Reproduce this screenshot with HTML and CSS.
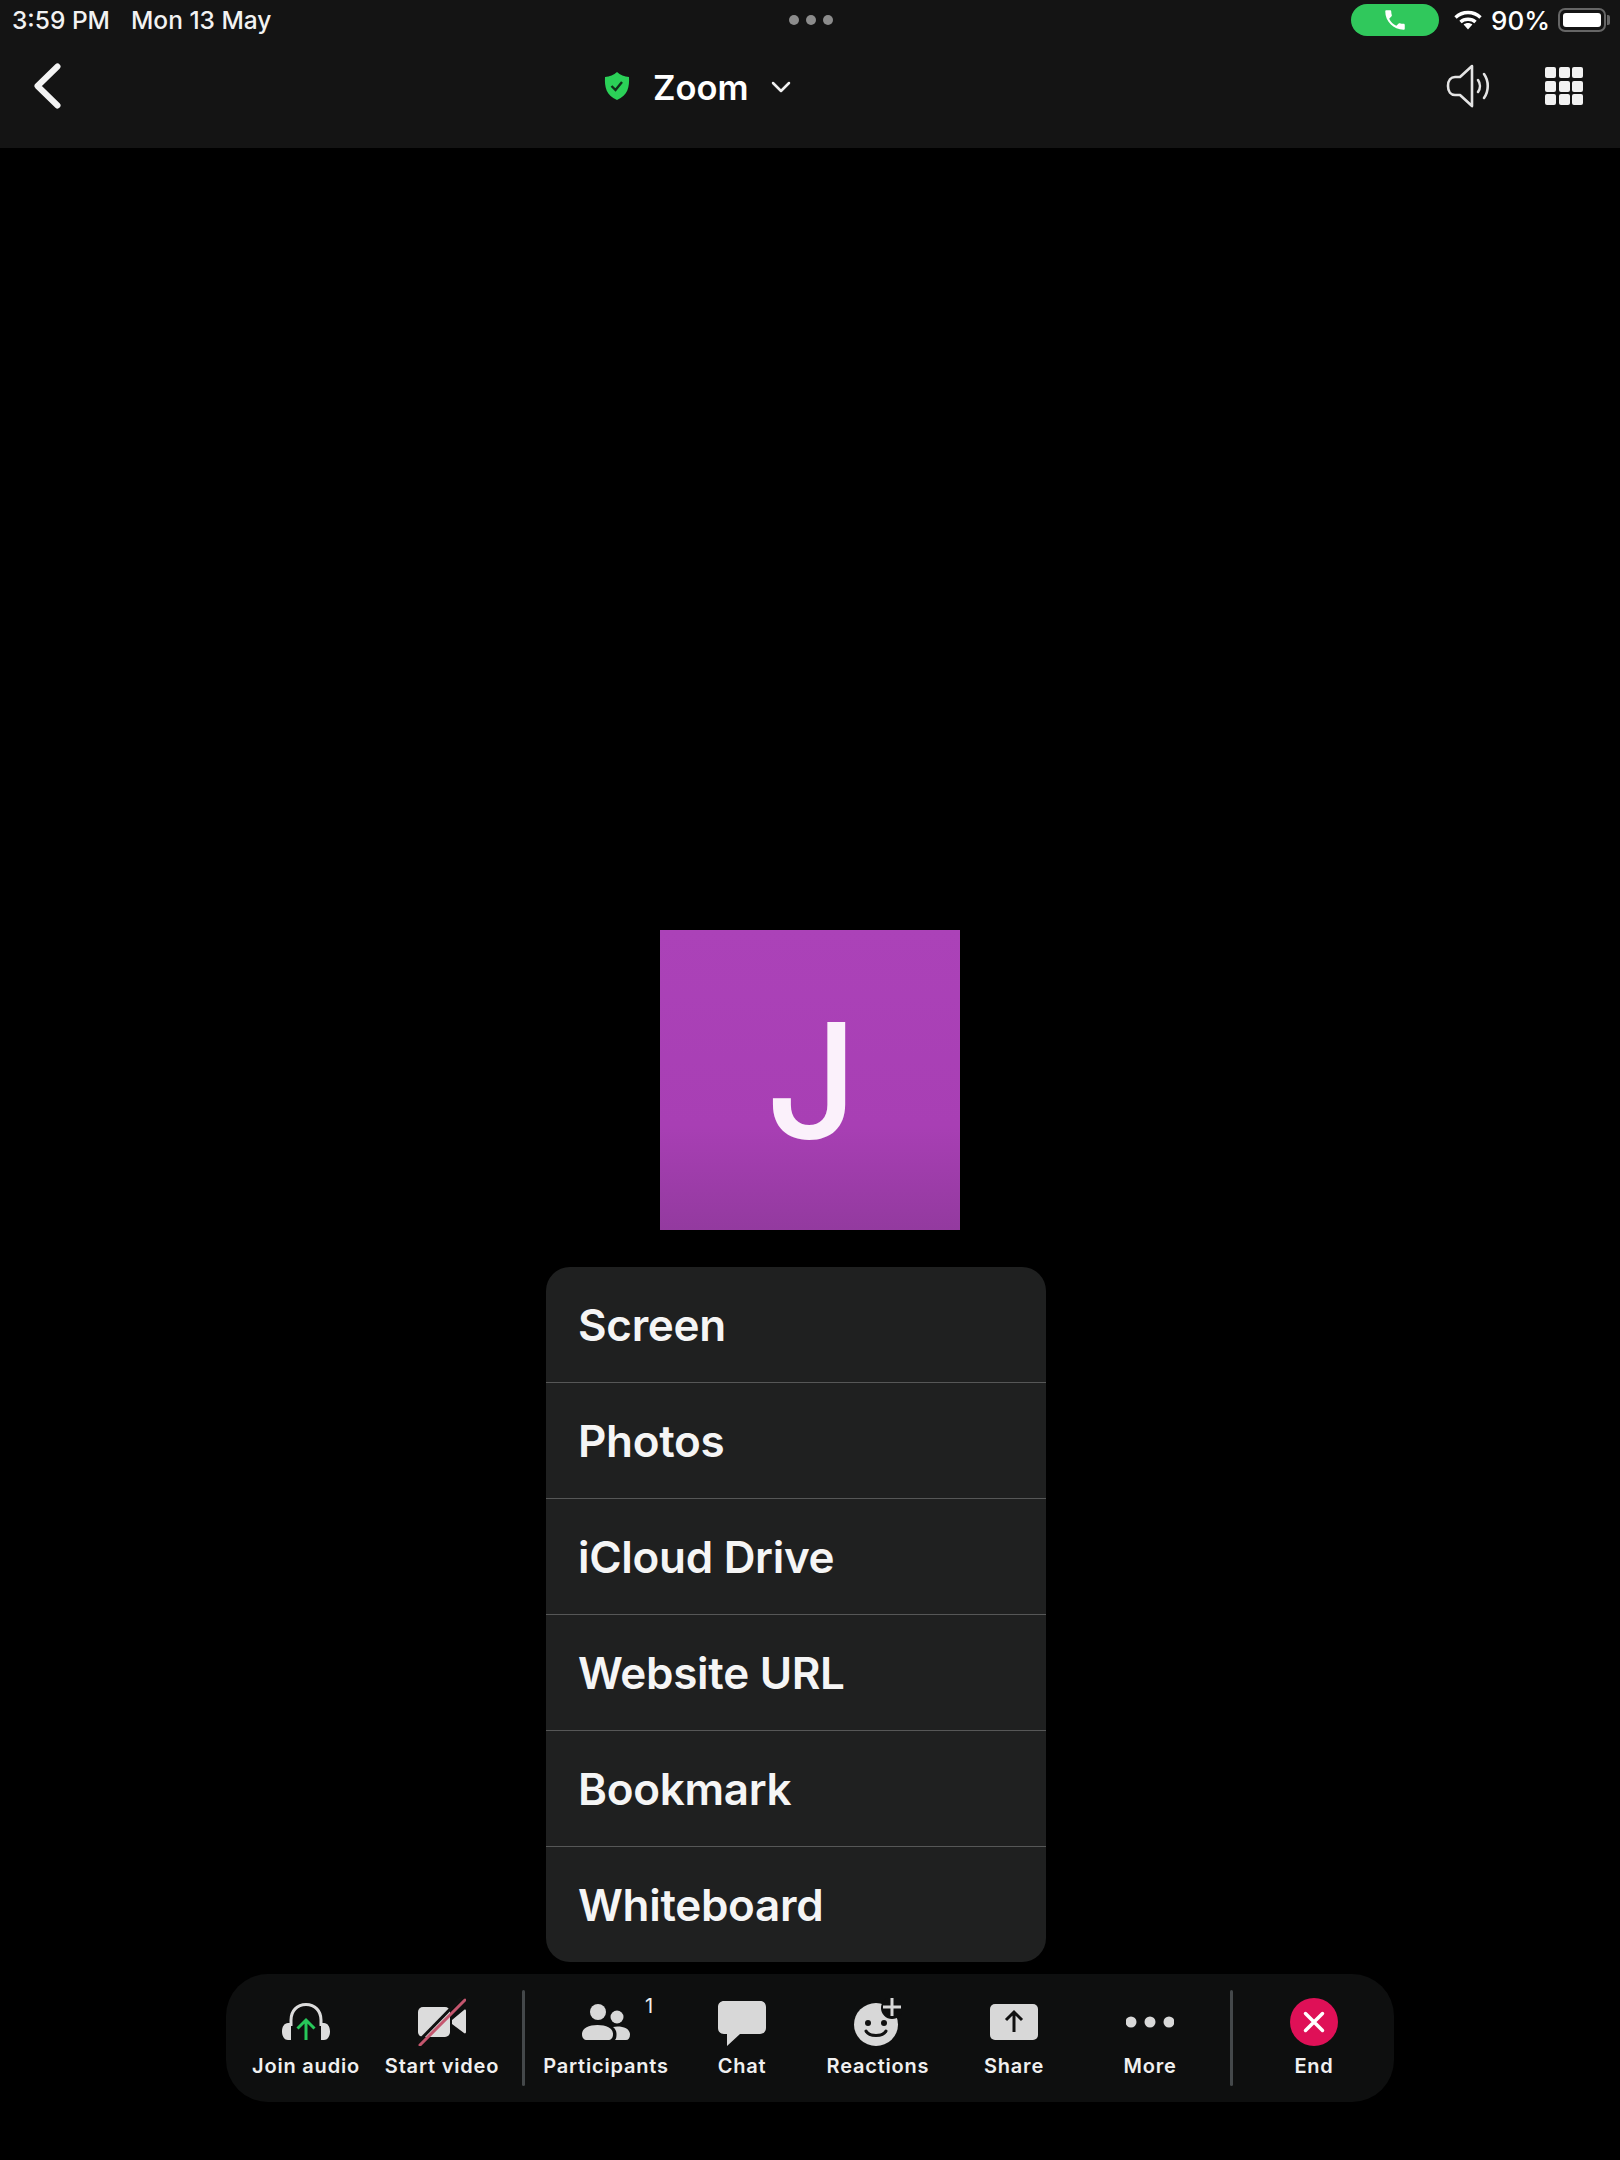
FILE: index.html
```html
<!DOCTYPE html>
<html lang="en">
<head>
  <meta charset="UTF-8" />
  <meta name="viewport" content="width=device-width, initial-scale=1.0" />
  <title>Zoom Meeting</title>
  <link rel="stylesheet" href="styles.css">
</head>
<body>
  <div class="screen">
    <!-- Top bar -->
    <div class="top-bar">
      <div class="status-bar">
        <div class="status-left">
          <span>3:59 PM</span>
          <span>Mon 13 May</span>
        </div>
        <div class="status-dots"><i></i><i></i><i></i></div>
        <div class="status-right">
          <div class="call-pill">
            <svg width="26" height="26" viewBox="0 0 24 24"><path fill="#fff" d="M6.62 10.79c1.44 2.83 3.76 5.14 6.59 6.59l2.2-2.2c.27-.27.67-.36 1.02-.24 1.12.37 2.33.57 3.57.57.55 0 1 .45 1 1V20c0 .55-.45 1-1 1-9.39 0-17-7.61-17-17 0-.55.45-1 1-1h3.5c.55 0 1 .45 1 1 0 1.25.2 2.45.57 3.57.11.35.03.74-.25 1.02l-2.2 2.2z"/></svg>
          </div>
          <svg class="wifi" width="28" height="20" viewBox="0 0 28 20" fill="none" stroke="#fff" stroke-width="3.4">
            <path d="M1.5 7.5C8.5 .8 19.5 .8 26.5 7.5"/>
            <path d="M6.5 12C10.5 8.4 17.5 8.4 21.5 12"/>
            <path fill="#fff" stroke="none" d="M9.6 14.6c2.6-2 6.2-2 8.8 0L14 19.6z"/>
          </svg>
          <span class="battery-text">90%</span>
          <div class="battery"><div class="battery-fill"></div></div>
          <div class="battery-nub"></div>
        </div>
      </div>
      <div class="nav-bar">
        <svg class="back" width="28" height="46" viewBox="0 0 28 46" fill="none" stroke="#f4f4f4" stroke-width="6" stroke-linecap="round" stroke-linejoin="round"><path d="M24.5 3.500L4.500 23l20 19.500"/></svg>
        <div class="meeting-title">
          <svg width="28" height="30" viewBox="0 0 28 30"><path fill="#2bd158" d="M14 1c3 3 7.500 4.500 12 5 .5 10-1 18-12 23C3 24 1.500 16 2 6c4.500-.5 9-2 12-5z"/><path fill="none" stroke="#10301a" stroke-width="2.400" d="M8.500 15l4 4 6.500-8"/></svg>
          <span>Zoom</span>
          <svg class="title-caret" width="20" height="12" viewBox="0 0 20 12" fill="none" stroke="#f0f0f0" stroke-width="2.500" stroke-linecap="round" stroke-linejoin="round"><path d="M2 2l8 8 8-8"/></svg>
        </div>
        <div class="nav-right">
          <svg width="44" height="44" viewBox="0 0 44 44" fill="none" stroke="#e4e4e4" stroke-width="2.600" stroke-linecap="round" stroke-linejoin="round">
            <path d="M26 2L14 13H9c-4 0-7 3-7 9s3 9 7 9h5l12 11z"/>
            <path d="M32 16c2.500 3.500 2.500 8.500 0 12"/>
            <path d="M38 10c5 7 5 17 0 24"/>
          </svg>
          <div class="apps-grid">
            <i></i><i></i><i></i><i></i><i></i><i></i><i></i><i></i><i></i>
          </div>
        </div>
      </div>
    </div>

    <!-- Video area -->
    <div class="stage">
      <div class="avatar">J</div>
      <div class="share-menu">
        <div class="menu-item">Screen</div>
        <div class="menu-item">Photos</div>
        <div class="menu-item">iCloud Drive</div>
        <div class="menu-item">Website URL</div>
        <div class="menu-item">Bookmark</div>
        <div class="menu-item">Whiteboard</div>
      </div>
    </div>

    <!-- Toolbar -->
    <div class="toolbar">
      <div class="tool">
        <svg width="48" height="48" viewBox="0 0 48 48">
          <path fill="none" stroke="#dcdcdc" stroke-width="3" d="M9 28v-6C9 13 15 6.500 24 6.500S39 13 39 22v6"/>
          <path fill="#dcdcdc" d="M9 25v17H6c-3.500 0-6-3.500-6-8.500S2.500 25 6 25zM39 25v17h3c3.500 0 6-3.500 6-8.500S45.500 25 42 25z"/>
          <path fill="none" stroke="#27c85a" stroke-width="3" d="M24 42V23M15.500 30.500L24 22l8.500 8.500"/>
        </svg>
        <span>Join audio</span>
      </div>
      <div class="tool">
        <svg width="48" height="48" viewBox="0 0 48 48">
          <rect x="0" y="9" width="32" height="30" rx="5" fill="#dcdcdc"/>
          <path fill="#dcdcdc" d="M34 22l12-10c1-.8 2-.3 2 1v21c0 1.300-1 1.800-2 1l-12-9z"/>
          <path stroke="#111" stroke-width="3" d="M-1 45L45 -2"/>
          <path stroke="#c4566e" stroke-width="3" stroke-linecap="round" d="M2 47L47 2"/>
        </svg>
        <span>Start video</span>
      </div>
      <div class="tool-sep"></div>
      <div class="tool">
        <svg width="48" height="48" viewBox="0 0 48 48" fill="#d8d8d8">
          <circle cx="16" cy="14" r="8"/>
          <path d="M0 36c0-6 7-9 15.500-9S31 30 31 36c0 4-2 6-5 6H5c-3 0-5-2-5-6z"/>
          <circle cx="35" cy="19" r="6.500"/>
          <path d="M33 42c1.500-1.500 1.500-4 1.500-6 0-3-1.500-5.500-3.500-7 1.500-.3 3-.5 4.500-.5C42 28.500 48 31 48 36.500c0 3.500-1.500 5.500-4 5.500z"/>
        </svg>
        <span>Participants</span>
        <em class="tool-count">1</em>
      </div>
      <div class="tool">
        <svg width="48" height="48" viewBox="0 0 48 48"><path fill="#d8d8d8" d="M6 3h36c3.500 0 6 2.500 6 6v21c0 3.500-2.500 6-6 6H22L9 48V36H6c-3.500 0-6-2.500-6-6V9c0-3.500 2.500-6 6-6z"/></svg>
        <span>Chat</span>
      </div>
      <div class="tool">
        <svg width="48" height="48" viewBox="0 0 48 48">
          <ellipse cx="22" cy="26.500" rx="22" ry="21.500" fill="#d8d8d8"/>
          <circle cx="38" cy="10" r="11" fill="#0e0f0f"/>
          <path stroke="#d8d8d8" stroke-width="3" d="M38 0v18M29 9h18"/>
          <circle cx="14" cy="25" r="3" fill="#111"/>
          <circle cx="30" cy="25" r="3" fill="#111"/>
          <path fill="none" stroke="#111" stroke-width="3" stroke-linecap="round" d="M12 33c3 6 17 6 20 0"/>
        </svg>
        <span>Reactions</span>
      </div>
      <div class="tool">
        <svg width="48" height="48" viewBox="0 0 48 48">
          <rect x="0" y="6" width="48" height="36" rx="5" fill="#d8d8d8"/>
          <path fill="none" stroke="#111" stroke-width="3" d="M24 34V15M16 22l8-8 8 8"/>
        </svg>
        <span>Share</span>
      </div>
      <div class="tool">
        <svg width="48" height="48" viewBox="0 0 48 48" fill="#d8d8d8">
          <circle cx="5" cy="24" r="5.500"/><circle cx="24" cy="24" r="5.500"/><circle cx="43" cy="24" r="5.500"/>
        </svg>
        <span>More</span>
      </div>
      <div class="tool-sep"></div>
      <div class="tool">
        <svg width="48" height="48" viewBox="0 0 48 48">
          <circle cx="24" cy="24" r="24" fill="#df1057"/>
          <path stroke="#fff" stroke-width="3.500" stroke-linecap="round" d="M15.500 15.500l17 17M32.500 15.500l-17 17"/>
        </svg>
        <span>End</span>
      </div>
    </div>
  </div>
</body>
</html>
```

FILE: styles.css
```css
* { margin: 0; padding: 0; box-sizing: border-box; font-family: 'Inter', 'Liberation Sans', sans-serif; }
body { background-color: #000; color: #fff; }
svg { display: block; }
.screen {
  width: 1620px;
  height: 2160px;
  display: flex;
  flex-direction: column;
  overflow: hidden;
}

/* top bar */
.top-bar { height: 148px; background-color: #141414; }
.status-bar {
  height: 40px;
  display: grid;
  grid-template-columns: 1fr auto 1fr;
  align-items: center;
  padding: 0 10px 0 12px;
}
.status-left { display: flex; gap: 21px; font-size: 24.500px; font-weight: 500; color: #f2f2f2; }
.status-dots { display: flex; gap: 7px; }
.status-dots i { width: 10px; height: 10px; border-radius: 50%; background-color: #8c8c8c; }
.status-right { display: flex; align-items: center; justify-content: flex-end; }
.call-pill {
  width: 88px;
  height: 32px;
  border-radius: 16px;
  background-color: #30c85c;
  display: flex;
  align-items: center;
  justify-content: center;
  margin-right: 15px;
}
.wifi { margin-right: 9px; }
.battery-text { font-size: 26px; font-weight: 500; margin-right: 8px; }
.battery {
  width: 48px;
  height: 24px;
  border: 2px solid #666;
  border-radius: 7px;
  padding: 3px;
}
.battery-fill { width: 38px; height: 100%; background-color: #fff; border-radius: 3px; }
.battery-nub { width: 3px; height: 10px; margin-left: 1px; background-color: #666; border-radius: 0 2px 2px 0; }

.nav-bar {
  height: 108px;
  padding: 0 37px 16px 33px;
  display: flex;
  align-items: center;
}
.meeting-title {
  display: flex;
  align-items: center;
  margin-left: 542px;
  font-size: 34.500px;
  font-weight: 600;
}
.meeting-title span { margin: 2px 22px 0 22px; }
.title-caret { margin-top: 2px; }
.nav-right { margin-left: auto; display: flex; align-items: center; gap: 55px; }
.apps-grid {
  display: grid;
  grid-template-columns: repeat(3, 11px);
  grid-auto-rows: 11px;
  gap: 2.500px;
}
.apps-grid i { background-color: #f2f2f2; border-radius: 2px; }

/* stage */
.stage { position: relative; flex: 1; display: flex; justify-content: center; }
.avatar {
  width: 300px;
  height: 300px;
  margin-top: 782px;
  padding-left: 4px;
  background: linear-gradient(#ab42b8 0%, #a83fb4 65%, #933a9f 100%);
  display: flex;
  align-items: center;
  justify-content: center;
  font-size: 160px;
  font-weight: 500;
  color: #fbf1fb;
}
.share-menu {
  position: absolute;
  left: 546px;
  top: 1119px;
  width: 500px;
  border-radius: 24px;
  background-color: #1f2020;
  overflow: hidden;
}
.menu-item {
  height: 116px;
  padding-left: 32px;
  display: flex;
  align-items: center;
  font-size: 44px;
  font-weight: 600;
  letter-spacing: -0.3px;
  color: #f5f5f5;
  border-bottom: 1px solid #565757;
}
.menu-item:last-child { height: 115px; border-bottom: none; }

/* toolbar */
.toolbar {
  width: 1168px;
  height: 128px;
  margin: 10px 0 58px 226px;
  padding: 24px 12px 0;
  background-color: #0e0f0f;
  border-radius: 42px;
  display: flex;
}
.tool {
  position: relative;
  width: 136px;
  display: flex;
  flex-direction: column;
  align-items: center;
  font-size: 20px;
  font-weight: 600;
  letter-spacing: 0.8px;
  color: #f0f0f0;
}
.tool span { margin-top: 8px; line-height: 24px; white-space: nowrap; }
.tool-count {
  position: absolute;
  top: -4px;
  left: 107px;
  font-size: 20px;
  font-style: normal;
  font-weight: 400;
}
.tool-sep { width: 3px; height: 96px; margin: -8px 13px 0 12px; background-color: #44484a; border-radius: 2px; }
```
